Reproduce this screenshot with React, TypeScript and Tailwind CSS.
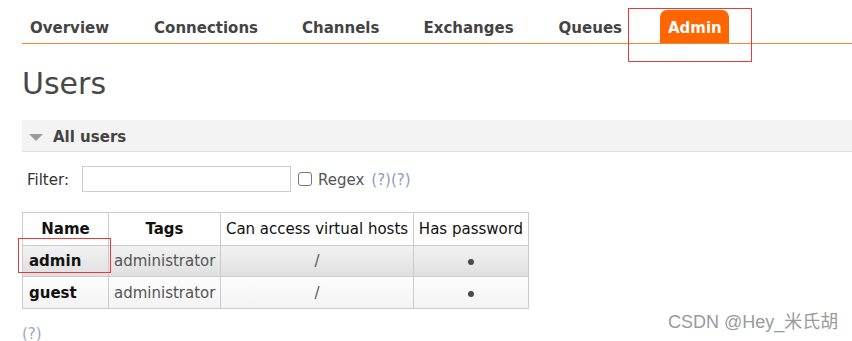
import React from "react";

const navItems: { label: string; ml: string }[] = [
  { label: "Overview", ml: "ml-0" },
  { label: "Connections", ml: "ml-[29px]" },
  { label: "Channels", ml: "ml-[28px]" },
  { label: "Exchanges", ml: "ml-[28px]" },
  { label: "Queues", ml: "ml-[29px]" },
];

export default function App() {
  return (
    <div className="relative w-[852px] h-[341px] bg-white overflow-hidden font-['DejaVu_Sans',Verdana,sans-serif] text-[15px]">
      {/* Top menu */}
      <div className="ml-[22px] pt-[10px] border-b border-[#f2892a]">
        <ul className="flex h-[33px]">
          {navItems.map((n) => (
            <li key={n.label} className={`${n.ml} px-2 pt-[8px] leading-[20px] font-bold text-[#444]`}>
              {n.label}
            </li>
          ))}
          <li className="ml-[30px] pl-[8px] pr-[7px] pt-[8px] leading-[20px] font-bold text-white bg-[#ff6600] rounded-t-[7px]">
            Admin
          </li>
        </ul>
      </div>

      <h1 className="mt-[22px] ml-[22px] text-[30px] leading-[36px] font-normal text-[#484848]">
        Users
      </h1>

      {/* Section header */}
      <div className="mt-[18px] ml-[22px] h-[32px] bg-[#f3f3f3] border-b border-[#dddddd] flex items-start pl-[7px] pt-[7px]">
        <svg width="14" height="20" viewBox="0 0 14 20" className="shrink-0">
          <polygon points="0,7 14,7 7,14" fill="#9a9a9a" />
        </svg>
        <span className="ml-[10px] leading-[20px] font-bold text-[#444]">All users</span>
      </div>

      {/* Filter row */}
      <div className="mt-[14px] ml-[27px] flex items-center h-[26px]">
        <span className="leading-[26px] pt-[2px] text-[#333]">Filter:</span>
        <div className="ml-[13px] w-[209px] h-[26px] border border-[#cccccc] bg-white" />
        <span className="ml-[7px] w-[14px] h-[14px] border border-[#777] rounded-[3px] bg-white" />
        <span className="ml-[6px] leading-[26px] pt-[1px] text-[#555]">Regex</span>
        <span className="ml-[7px] leading-[26px] pt-[1px] text-[#8e9ac0]">(?)(?)</span>
      </div>

      {/* Table */}
      <table className="mt-[20px] ml-[22px] table-fixed border-collapse w-[506px]">
        <colgroup>
          <col className="w-[86px]" />
          <col className="w-[112px]" />
          <col className="w-[193px]" />
          <col className="w-[115px]" />
        </colgroup>
        <thead>
          <tr className="h-[33px] bg-white">
            <th className="border border-[#cccccc] pt-[1px] px-[4px] font-bold text-[#111] text-center whitespace-nowrap">Name</th>
            <th className="border border-[#cccccc] pt-[1px] px-[4px] font-bold text-[#111] text-center whitespace-nowrap">Tags</th>
            <th className="border border-[#cccccc] pt-[1px] px-[2px] font-normal text-[#111] text-center whitespace-nowrap">Can access virtual hosts</th>
            <th className="border border-[#cccccc] pt-[1px] px-[2px] font-normal text-[#111] text-center whitespace-nowrap">Has password</th>
          </tr>
        </thead>
        <tbody>
          <tr className="h-[31px] bg-gradient-to-b from-[#f2f2f2] to-[#dfdfdf]">
            <td className="border border-[#cccccc] pt-[1px] pl-[6px] font-bold text-[#111] whitespace-nowrap">admin</td>
            <td className="border border-[#cccccc] pt-[1px] pl-[5px] text-[#555] whitespace-nowrap">administrator</td>
            <td className="border border-[#cccccc] pt-[1px] text-center text-[#555]">/</td>
            <td className="border border-[#cccccc] pt-[2px] text-center">
              <span className="inline-block w-[6px] h-[6px] rounded-full bg-[#4a4a4a] align-middle" />
            </td>
          </tr>
          <tr className="h-[32px] bg-gradient-to-b from-[#fdfdfd] to-[#f3f3f3]">
            <td className="border border-[#cccccc] pt-[1px] pl-[6px] font-bold text-[#111] whitespace-nowrap">guest</td>
            <td className="border border-[#cccccc] pt-[1px] pl-[5px] text-[#555] whitespace-nowrap">administrator</td>
            <td className="border border-[#cccccc] pt-[1px] text-center text-[#555]">/</td>
            <td className="border border-[#cccccc] pt-[2px] text-center">
              <span className="inline-block w-[6px] h-[6px] rounded-full bg-[#4a4a4a] align-middle" />
            </td>
          </tr>
        </tbody>
      </table>

      <div className="mt-[17px] ml-[22px] leading-[16px] text-[#9aa6c0]">(?)</div>

      {/* Annotation boxes */}
      <div className="absolute left-[628px] top-[8px] w-[124px] h-[54px] border border-[#e8393c]" />
      <div className="absolute left-[18px] top-[238px] w-[93px] h-[35px] border border-[#e8393c]" />

      {/* Watermark */}
      <div className="absolute left-[668px] top-[313px] leading-[18px] text-[18px] text-[#9a9a9a] font-['Liberation_Sans','Noto_Sans_CJK_SC',sans-serif] whitespace-nowrap">
        CSDN @Hey_米氏胡
      </div>
    </div>
  );
}
